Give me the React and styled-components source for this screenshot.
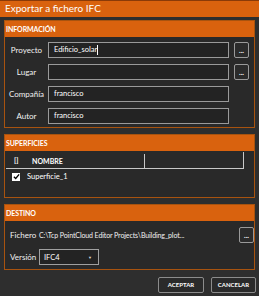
import React from "react";
import styled, { createGlobalStyle } from "styled-components";

const Global = createGlobalStyle`
  html, body { margin: 0; padding: 0; background: #2d2d2d; }
  * { box-sizing: border-box; }
  #root { width: 259px; height: 296px; }
`;

const ORANGE = "#d9620e";
const BORDER = "#a8530f";

const Window = styled.div`
  width: 259px;
  height: 296px;
  background: #2e2e2e;
  display: flex;
  flex-direction: column;
  font-family: Lato, "Open Sans", sans-serif;
  color: #fff;
  overflow: hidden;
`;

const TitleBar = styled.div`
  height: 17px;
  background: ${ORANGE};
  border-top: 1px solid #8a3a08;
  font-size: 10px;
  line-height: 15px;
  padding-left: 5px;
  color: #fff;
`;

const Body = styled.div`
  display: flex;
  flex-direction: column;
  padding: 3px 4px 0 4px;
  gap: 6px;
`;

const Section = styled.section`
  border: 1px solid ${BORDER};
  background: #292929;
  height: ${(p) => p.$h}px;
  display: flex;
  flex-direction: column;
`;

const SectionHeader = styled.div`
  height: 16px;
  background: ${ORANGE};
  font-size: 7px;
  font-weight: 700;
  line-height: 16px;
  padding-left: 1px;
  text-transform: uppercase;
  letter-spacing: -0.1px;
`;

const FormGrid = styled.div`
  display: grid;
  grid-template-columns: 43px 181px 15px;
  column-gap: 0;
  row-gap: 6px;
  padding-top: 5px;
  grid-auto-rows: 16px;
`;

const Label = styled.div`
  font-size: 8px;
  line-height: 16px;
  text-align: ${(p) => p.$align || "center"};
  padding-left: ${(p) => p.$pl || 0}px;
  color: #f2f2f2;
`;

const Input = styled.div`
  border: 1px solid #9a9a9a;
  background: #232323;
  font-size: 7.5px;
  line-height: 14px;
  padding-left: 5px;
  color: #fff;
  display: flex;
  align-items: center;
`;

const Caret = styled.span`
  display: inline-block;
  width: 1px;
  height: 10px;
  background: #fff;
`;

const DotsButton = styled.div`
  grid-column: 3;
  margin-left: 5px;
  width: 15px;
  height: 16px;
  border: 1px solid #9a9a9a;
  border-radius: 2px;
  background: #2b2b2b;
  font-size: 7px;
  font-weight: 700;
  line-height: 14px;
  text-align: center;
  color: #fff;
`;

const GridHead = styled.div`
  display: grid;
  grid-template-columns: 22px 117px 98px;
  height: 17px;
  margin: 1px 0 0 1px;
  width: 238px;
  border-bottom: 1px solid #c8c8c8;
  border-right: 1px solid #c8c8c8;
`;

const HeadCell = styled.div`
  font-size: 7px;
  font-weight: 700;
  padding-left: ${(p) => p.$pl || 0}px;
  border-right: ${(p) => (p.$divider ? "1px solid #c8c8c8" : "none")};
  margin: ${(p) => (p.$divider ? "2px 0 0 0" : "0")};
  line-height: ${(p) => (p.$divider ? "14px" : "16px")};
`;

const DataRow = styled.div`
  display: flex;
  align-items: center;
  height: 15px;
  padding-left: 7px;
  gap: 7px;
  font-size: 7.5px;
`;

const Check = styled.div`
  width: 8px;
  height: 8px;
  background: #fff;
  display: flex;
  align-items: center;
  justify-content: center;
`;

const DestRow = styled.div`
  display: grid;
  grid-template-columns: 34px 1fr 15px;
  align-items: center;
  height: 16px;
  padding-right: 5px;
  margin-top: ${(p) => p.$mt}px;
`;

const PathText = styled.div`
  font-size: 7px;
  color: #f2f2f2;
  white-space: nowrap;
  letter-spacing: -0.1px;
`;

const Select = styled.div`
  width: 60px;
  height: 16px;
  border: 1px solid #a0a0a0;
  background: #232323;
  display: flex;
  align-items: center;
  justify-content: space-between;
  padding: 0 6px 0 4px;
  font-size: 7.5px;
`;

const Arrow = styled.span`
  font-size: 4px;
  color: #ddd;
`;

const Footer = styled.div`
  display: flex;
  justify-content: flex-end;
  gap: 7px;
  padding: 7px 3px 0 0;
`;

const ActionButton = styled.div`
  width: ${(p) => p.$w}px;
  height: 16px;
  border: 1px solid #8c8c8c;
  border-radius: 2px;
  background: #2a2a2a;
  font-size: 6px;
  font-weight: 700;
  line-height: 14px;
  text-align: center;
  color: #fff;
`;

export default function App() {
  return (
    <>
      <Global />
      <Window>
        <TitleBar>Exportar a fichero IFC</TitleBar>
        <Body>
          <Section $h={108}>
            <SectionHeader>Información</SectionHeader>
            <FormGrid>
              <Label>Proyecto</Label>
              <Input>
                Edificio_solar
                <Caret />
              </Input>
              <DotsButton>...</DotsButton>
              <Label>Lugar</Label>
              <Input />
              <DotsButton>...</DotsButton>
              <Label>Compañía</Label>
              <Input>francisco</Input>
              <span />
              <Label>Autor</Label>
              <Input>francisco</Input>
            </FormGrid>
          </Section>
          <Section $h={64}>
            <SectionHeader>Superficies</SectionHeader>
            <GridHead>
              <HeadCell $pl={8}>[]</HeadCell>
              <HeadCell $pl={4} $divider>
                NOMBRE
              </HeadCell>
              <HeadCell />
            </GridHead>
            <DataRow>
              <Check>
                <svg width="7" height="7" viewBox="0 0 8 8">
                  <path d="M1 4.2 L3.1 6.3 L7 1.6" stroke="#000" strokeWidth="1.5" fill="none" />
                </svg>
              </Check>
              Superficie_1
            </DataRow>
          </Section>
          <Section $h={66}>
            <SectionHeader>Destino</SectionHeader>
            <DestRow $mt={6}>
              <Label $align="left" $pl={5}>
                Fichero
              </Label>
              <PathText>C:\Tcp PointCloud Editor Projects\Building_plot...</PathText>
              <DotsButton>...</DotsButton>
            </DestRow>
            <DestRow $mt={6}>
              <Label $align="left" $pl={5}>
                Versión
              </Label>
              <Select>
                IFC4
                <Arrow>▼</Arrow>
              </Select>
            </DestRow>
          </Section>
        </Body>
        <Footer>
          <ActionButton $w={46}>ACEPTAR</ActionButton>
          <ActionButton $w={45}>CANCELAR</ActionButton>
        </Footer>
      </Window>
    </>
  );
}
